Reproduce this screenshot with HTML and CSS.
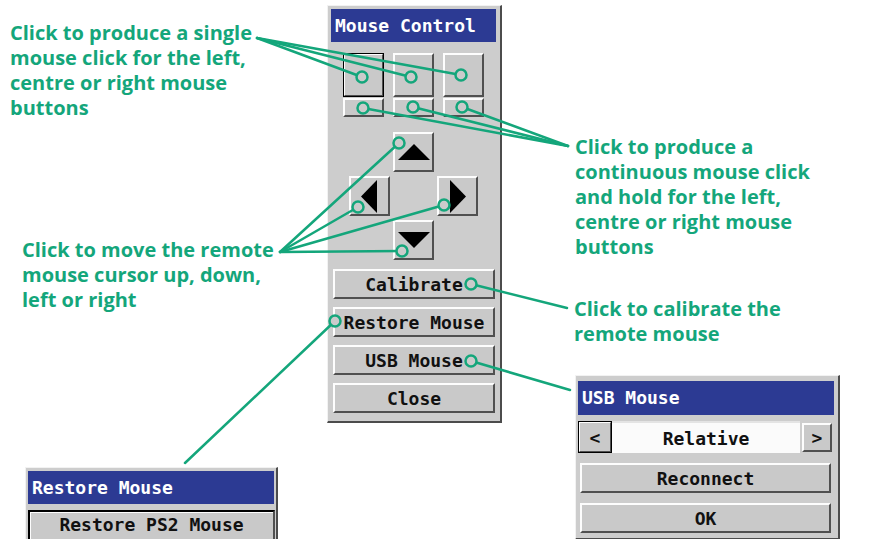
FILE: index.html
```html
<!DOCTYPE html>
<html>
<head>
<meta charset="utf-8">
<link rel="stylesheet" href="styles.css">
</head>
<body>
<div class="canvas">
  <p class="note note-single">Click to produce a single<br>mouse click for the left,<br>centre or right mouse<br>buttons</p>
  <p class="note note-hold">Click to produce a<br>continuous mouse click<br>and hold for the left,<br>centre or right mouse<br>buttons</p>
  <p class="note note-move">Click to move the remote<br>mouse cursor up, down,<br>left or right</p>
  <p class="note note-cal">Click to calibrate the<br>remote mouse</p>

  <div class="win win-main">
    <div class="title">Mouse Control</div>
    <div class="clicks">
      <div class="btn big focus"></div>
      <div class="btn big"></div>
      <div class="btn big"></div>
      <div class="btn small"></div>
      <div class="btn small"></div>
      <div class="btn small"></div>
    </div>
    <div class="arrows">
      <div class="btn arrow a-up"><svg width="34" height="18" viewBox="0 0 34 18"><polygon points="1,17 17,1 33,17" fill="#000"/></svg></div>
      <div class="btn arrow a-left"><svg width="17" height="33" viewBox="0 0 17 33"><polygon points="16,0 0,16.5 16,33" fill="#000"/></svg></div>
      <div class="btn arrow a-right"><svg width="17" height="33" viewBox="0 0 17 33"><polygon points="1,0 17,16.5 1,33" fill="#000"/></svg></div>
      <div class="btn arrow a-down"><svg width="34" height="18" viewBox="0 0 34 18"><polygon points="1,1 33,1 17,17" fill="#000"/></svg></div>
    </div>
    <div class="actions">
      <div class="btn txt">Calibrate</div>
      <div class="btn txt">Restore Mouse</div>
      <div class="btn txt">USB Mouse</div>
      <div class="btn txt">Close</div>
    </div>
  </div>

  <div class="win win-usb">
    <div class="title">USB Mouse</div>
    <div class="selector">
      <div class="btn sel-prev focus">&lt;</div>
      <div class="field">Relative</div>
      <div class="btn sel-next">&gt;</div>
    </div>
    <div class="btn wide">Reconnect</div>
    <div class="btn wide">OK</div>
  </div>

  <div class="win win-restore">
    <div class="title">Restore Mouse</div>
    <div class="btn rwide">Restore PS2 Mouse</div>
  </div>

  <svg class="leaders" width="879" height="539" viewBox="0 0 879 539">
    <g stroke="#14a67b" stroke-width="2.5" fill="none" stroke-linecap="round">
      <line x1="257" y1="38" x2="362" y2="77"/>
      <line x1="257" y1="38" x2="411" y2="77"/>
      <line x1="257" y1="38" x2="461" y2="75"/>
      <line x1="568" y1="146" x2="363" y2="108"/>
      <line x1="568" y1="146" x2="413" y2="107"/>
      <line x1="568" y1="146" x2="462" y2="107"/>
      <line x1="280" y1="252" x2="399" y2="143"/>
      <line x1="280" y1="252" x2="358" y2="207"/>
      <line x1="280" y1="252" x2="444" y2="205"/>
      <line x1="280" y1="252" x2="402" y2="251"/>
      <line x1="567" y1="308" x2="471" y2="284"/>
      <line x1="335" y1="321" x2="185" y2="463"/>
      <line x1="471" y1="361" x2="570" y2="390"/>
    </g>
    <g stroke="#14a67b" stroke-width="2.5" fill="#cbcbcb">
      <circle cx="362" cy="77" r="5.5"/>
      <circle cx="411" cy="77" r="5.5"/>
      <circle cx="461" cy="75" r="5.5"/>
      <circle cx="363" cy="108" r="5.5"/>
      <circle cx="413" cy="107" r="5.5"/>
      <circle cx="462" cy="107" r="5.5"/>
      <circle cx="399" cy="143" r="5.5"/>
      <circle cx="358" cy="207" r="5.5"/>
      <circle cx="444" cy="205" r="5.5"/>
      <circle cx="402" cy="251" r="5.5"/>
      <circle cx="471" cy="284" r="5.5"/>
      <circle cx="335" cy="321" r="5.5"/>
      <circle cx="471" cy="361" r="5.5"/>
    </g>
  </svg>
</div>
</body>
</html>
```
FILE: styles.css
```css
html, body {
  margin: 0;
  padding: 0;
  background: #fff;
  overflow: hidden;
}

.canvas {
  position: relative;
  width: 879px;
  height: 539px;
  overflow: hidden;
}

.note {
  position: absolute;
  margin: 0;
  font-family: "Open Sans", "Noto Sans", sans-serif;
  font-weight: 700;
  font-size: 20px;
  line-height: 25px;
  color: #14a67b;
  white-space: nowrap;
}
.note-single { left: 10px; top: 20px; }
.note-hold { left: 575px; top: 134px; }
.note-move { left: 22px; top: 237px; }
.note-cal { left: 574px; top: 296px; }

.win {
  position: absolute;
  box-sizing: border-box;
  background: #cdcdcd;
  border-top: 1px solid #f2f2f2;
  border-left: 1px solid #f2f2f2;
  border-right: 2px solid #4c4c4c;
  border-bottom: 2px solid #4c4c4c;
  font-family: "DejaVu Sans Mono", "Liberation Mono", monospace;
  font-weight: bold;
  font-size: 18px;
  color: #111;
}

.title {
  background: #2c3a93;
  color: #fff;
  padding-left: 4px;
  height: 33px;
  line-height: 33px;
  white-space: nowrap;
}

.btn {
  box-sizing: border-box;
  background: #c9c9c9;
  border: 2px solid;
  border-color: #fdfdfd #505050 #505050 #fdfdfd;
  display: flex;
  align-items: center;
  justify-content: center;
  white-space: nowrap;
}
.focus {
  outline: 1px solid #000;
  outline-offset: -1px;
}

/* main window */
.win-main {
  left: 327px;
  top: 5px;
  width: 175px;
  height: 418px;
  padding: 3px 4px 0 3px;
}
.clicks {
  margin-top: 11px;
  display: grid;
  grid-template-columns: 41px 41px 41px;
  grid-template-rows: 44px 19px;
  column-gap: 9px;
  row-gap: 1px;
  justify-content: center;
}
.arrows {
  margin-top: 15px;
  display: grid;
  grid-template-columns: 41px 41px 41px;
  grid-template-rows: 40px 40px 40px;
  column-gap: 3px;
  row-gap: 4px;
  justify-content: center;
}
.a-up { grid-column: 2; grid-row: 1; }
.a-left { grid-column: 1; grid-row: 2; }
.a-right { grid-column: 3; grid-row: 2; }
.a-down { grid-column: 2; grid-row: 3; }
.arrow svg { display: block; }

.actions {
  margin: 9px 1px 0 2px;
  display: flex;
  flex-direction: column;
  gap: 8px;
}
.txt {
  height: 30px;
}

/* USB window */
.win-usb {
  left: 575px;
  top: 375px;
  width: 265px;
  height: 165px;
  padding: 5px 4px 0 2px;
}
.win-usb .title { height: 34px; line-height: 34px; }
.selector {
  margin-top: 6px;
  display: flex;
  align-items: flex-start;
  height: 32px;
}
.sel-prev {
  width: 34px;
  height: 32px;
}
.field {
  width: 188px;
  height: 32px;
  background: #fbfbfb;
  border-top: 2px solid #e4e4e4;
  box-sizing: border-box;
  display: flex;
  align-items: center;
  justify-content: center;
}
.sel-next {
  width: 30px;
  height: 29px;
  margin-top: 2px;
  margin-left: 2px;
}
.wide {
  margin: 10px 3px 0 2px;
  height: 30px;
}
.wide + .wide { margin-top: 10px; }

/* Restore window */
.win-restore {
  left: 25px;
  top: 467px;
  width: 253px;
  height: 90px;
  padding: 3px 2px 0 2px;
}
.rwide {
  margin-top: 6px;
  height: 34px;
  width: 247px;
  border-color: #000 #505050 #505050 #000;
  box-shadow: inset 1px 1px 0 #fdfdfd;
  align-items: flex-start;
  padding-top: 2px;
}

.leaders {
  position: absolute;
  left: 0;
  top: 0;
  pointer-events: none;
}
```
